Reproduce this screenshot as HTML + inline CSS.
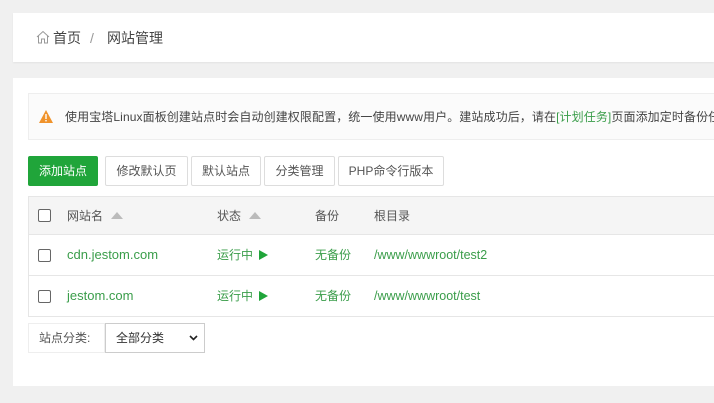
<!DOCTYPE html><html><head><meta charset="utf-8"><style>
*{box-sizing:border-box;margin:0;padding:0}
body{width:714px;height:403px;background:#f0f0f0;font-family:"Liberation Sans","Noto Sans CJK SC",sans-serif;font-size:12px;color:#555;position:relative;overflow:hidden}
.card{position:absolute;background:#fff;left:13px;right:0}
.bc{top:13px;height:49px;box-shadow:0 1px 2px rgba(0,0,0,.06)}
.bc span{position:absolute;top:15px;line-height:20px;font-size:14px;color:#444}
.main{top:78px;height:308px}
.alert{position:absolute;left:15px;right:0;top:15px;height:47px;background:#fbfbfb;border:1px solid #eee;border-right:0}
.alert .t{position:absolute;left:36px;top:14px;color:#444;white-space:nowrap;font-size:12px;letter-spacing:0.1px}
.btn{position:absolute;top:78px;height:30px;border:1px solid #ddd;border-radius:2px;background:#fff;line-height:28px;text-align:center;color:#555;font-size:12px}
.tbl{position:absolute;left:15px;right:0;top:118px;height:121px;border:1px solid #e6e6e6;border-right:0}
.hd{position:absolute;left:0;right:0;top:0;height:38px;background:#f5f5f5;border-bottom:1px solid #e6e6e6}
.row{position:absolute;left:0;right:0;height:41px;border-bottom:1px solid #e6e6e6}
.c{position:absolute;top:10px;line-height:18px;white-space:nowrap;font-size:12px}
.row .c{top:11px}
.cb{position:absolute;left:9px;top:12px;width:13px;height:13px;border:1px solid #666;border-radius:2px;background:#fff}
.g{color:#3a9d4a}
.arr{display:inline-block;width:0;height:0;border-left:6px solid transparent;border-right:6px solid transparent;border-bottom:7px solid #bbb;margin-left:8px;vertical-align:1px}
.play{display:inline-block;width:0;height:0;border-top:5px solid transparent;border-bottom:5px solid transparent;border-left:9px solid #20a53a;margin-left:6px;vertical-align:-1px}
</style></head><body>
<div class="card bc">
<svg style="position:absolute;left:23px;top:17px" width="14" height="14" viewBox="0 0 14 14"><path d="M1 7L7 1.5 13 7M2.5 5.8V13H5.5V9H8.5V13H11.5V5.8" fill="none" stroke="#999" stroke-width="1"/></svg>
<span style="left:40px">首页</span><span style="left:77px;color:#999">/</span><span style="left:94px">网站管理</span></div>
<div class="card main">
<div class="alert"><svg style="position:absolute;left:10px;top:16px" width="14" height="13" viewBox="0 0 14 13"><path d="M7 0L14 13H0Z" fill="#f0932b"/><rect x="6.3" y="4" width="1.4" height="5" fill="#fff"/><rect x="6.3" y="10" width="1.4" height="1.4" fill="#fff"/></svg>
<div class="t">使用宝塔Linux面板创建站点时会自动创建权限配置，统一使用www用户。建站成功后，请在<span class="g">[计划任务]</span>页面添加定时备份任务！</div></div>
<div class="btn" style="left:15px;width:70px;background:#20a53a;border-color:#20a53a;color:#fff">添加站点</div>
<div class="btn" style="left:92px;width:83px">修改默认页</div>
<div class="btn" style="left:178px;width:70px">默认站点</div>
<div class="btn" style="left:251px;width:71px">分类管理</div>
<div class="btn" style="left:325px;width:106px">PHP命令行版本</div>
<div class="tbl">
<div class="hd"><div class="cb"></div><div class="c" style="left:38px">网站名<span class="arr"></span></div><div class="c" style="left:188px">状态<span class="arr"></span></div><div class="c" style="left:286px">备份</div><div class="c" style="left:345px">根目录</div></div>
<div class="row" style="top:38px"><div class="cb" style="top:14px"></div><div class="c g" style="left:38px;font-size:13px">cdn.jestom.com</div><div class="c g" style="left:188px">运行中<span class="play"></span></div><div class="c g" style="left:286px">无备份</div><div class="c g" style="left:345px;font-size:12.5px">/www/wwwroot/test2</div></div>
<div class="row" style="top:79px;border-bottom:0"><div class="cb" style="top:14px"></div><div class="c g" style="left:38px;font-size:13px">jestom.com</div><div class="c g" style="left:188px">运行中<span class="play"></span></div><div class="c g" style="left:286px">无备份</div><div class="c g" style="left:345px;font-size:12.5px">/www/wwwroot/test</div></div>
</div>
<div style="position:absolute;left:15px;top:245px;width:77px;height:30px;border:1px solid #eee;line-height:28px;padding-left:10px;color:#555">站点分类:</div>
<div style="position:absolute;left:92px;top:245px;width:100px;height:30px;border:1px solid #ccc;line-height:28px;padding-left:10px;color:#333">全部分类<svg style="position:absolute;right:6px;top:11px" width="9" height="6" viewBox="0 0 9 6"><path d="M1 1L4.5 4.5 8 1" fill="none" stroke="#222" stroke-width="1.6"/></svg></div>
</div>
</body></html>
